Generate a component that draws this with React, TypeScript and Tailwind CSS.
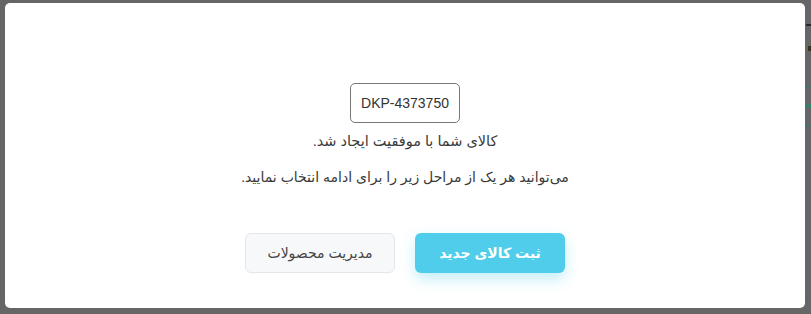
import React from "react";

export default function App() {
  return (
    <div className="relative w-[811px] h-[314px] bg-[#666666] overflow-hidden flex pt-[3px] pl-[5px] pr-[6px] pb-[6px]" style={{ fontFamily: '"Liberation Sans", "DejaVu Sans", sans-serif' }}>
      {/* faint background content peeking at the right edge */}
      <div className="absolute right-0 top-[24px] w-[5px] h-[2px] bg-[#2a2a2a]" />
      <div className="absolute right-0 top-[46px] w-[3px] h-[5px] bg-[#3a3020]" />
      <div className="absolute right-0 top-[86px] w-[6px] h-[1px] bg-[#2f7a62]" />
      <div className="absolute right-0 top-[104px] w-[5px] h-[4px] bg-[#3b7f6a]" />
      <div className="absolute right-0 top-[125px] w-[6px] h-[1px] bg-[#2f7a62]" />

      <div dir="rtl" className="flex-1 bg-white rounded-[5px] flex flex-col items-center pt-[80px]">
        <div dir="ltr" className="w-[110px] h-[40px] border border-[#777777] rounded-[5px] flex items-center justify-center text-[14px] text-[#333333]">
          DKP-4373750
        </div>
        <p className="mt-[7px] text-[14.5px] leading-[22px] text-[#3a3a3a]">کالای شما با موفقیت ایجاد شد.</p>
        <p className="mt-[14px] text-[14px] leading-[22px] text-[#3a3a3a]">می‌توانید هر یک از مراحل زیر را برای ادامه انتخاب نمایید.</p>
        <div className="mt-[45px] flex gap-[20px]">
          <button className="w-[150px] h-[40px] rounded-[6px] bg-[#4fcdea] text-white text-[14px] font-bold shadow-[0_6px_14px_rgba(79,205,234,0.35)]">
            ثبت کالای جدید
          </button>
          <button className="w-[150px] h-[40px] rounded-[6px] bg-[#f7f8fa] border border-[#e3e6ea] text-[#444444] text-[14px]">
            مدیریت محصولات
          </button>
        </div>
      </div>
    </div>
  );
}
